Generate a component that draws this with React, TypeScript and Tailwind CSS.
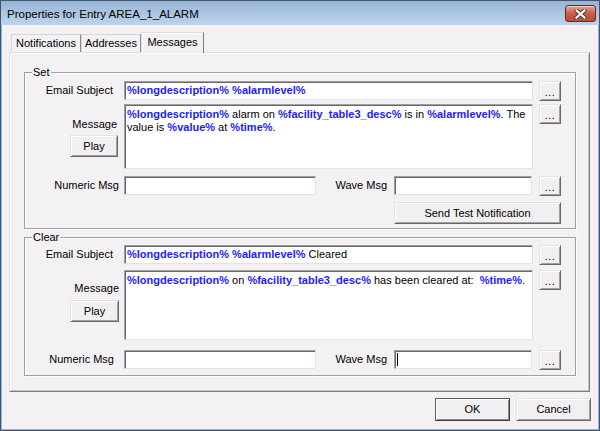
import type { ReactNode } from 'react';

const V = ({ children }: { children: ReactNode }) => (
  <span className="font-bold text-[#1c1cff]">{children}</span>
);

function Btn({ children, className = '', primary = false }: { children: ReactNode; className?: string; primary?: boolean }) {
  return (
    <div
      className={`flex items-center justify-center shrink-0 bg-[#f2eff2] border ${
        primary
          ? 'border-t-[#5a5a5a] border-l-[#5a5a5a] border-r-[#3c3c3c] border-b-[#3c3c3c] shadow-[inset_1px_1px_0_#ffffff,inset_-1px_-1px_0_#8a8a8a]'
          : 'border-t-[#e3e3e3] border-l-[#e3e3e3] border-r-[#696969] border-b-[#696969] shadow-[inset_1px_1px_0_#ffffff,inset_-1px_-1px_0_#a0a0a0]'
      } ${className}`}
    >
      {children}
    </div>
  );
}

function Dots() {
  return (
    <Btn className="w-[22px] h-[20px]">
      <span className="mt-[3px] tracking-[0.5px]">...</span>
    </Btn>
  );
}

function Field({ children, className = '' }: { children?: ReactNode; className?: string }) {
  return (
    <div
      className={`shrink-0 bg-white border border-t-[#a0a0a0] border-l-[#a0a0a0] border-r-[#e3e3e3] border-b-[#e3e3e3] shadow-[inset_1px_1px_0_#6a6a6a] overflow-hidden whitespace-nowrap ${className}`}
    >
      {children}
    </div>
  );
}

function Group({ title, className = '', children }: { title: string; className?: string; children: ReactNode }) {
  return (
    <div className={`relative border border-[#a0a0a0] shadow-[inset_1px_1px_0_#ffffff,1px_1px_0_#ffffff] ${className}`}>
      <span className="absolute -top-[7px] left-[7px] px-[1px] bg-[#f4f1f4] leading-[13px]">{title}</span>
      {children}
    </div>
  );
}

function CloseIcon() {
  return (
    <svg width="13" height="10" viewBox="0 0 13 10">
      <path d="M2.5 1.5 L10.5 8.5 M10.5 1.5 L2.5 8.5" stroke="#3d3d3d" strokeWidth="4" strokeLinecap="square" />
      <path d="M2.5 1.5 L10.5 8.5 M10.5 1.5 L2.5 8.5" stroke="#ffffff" strokeWidth="2.2" strokeLinecap="square" />
    </svg>
  );
}

export default function App() {
  return (
    <div className="w-[600px] h-[431px] flex flex-col border border-[#44566e] bg-[#f4f1f4] font-['Liberation_Sans',Arial,sans-serif] text-[11px] leading-[13px] text-black overflow-hidden">
      {/* Title bar */}
      <div className="h-[24px] shrink-0 flex items-start justify-between bg-gradient-to-b from-[#98b4d5] to-[#bcd4ed] pl-[6px] pr-[3px]">
        <span className="mt-[6px] text-[11.5px] leading-[14px]">Properties for Entry AREA_1_ALARM</span>
        <div className="mt-[4px] w-[31px] h-[17px] rounded-[3px] border border-[#6a2a22] bg-gradient-to-b from-[#e6a493] via-[#cc5c47] to-[#c24a33] shadow-[inset_0_1px_0_#f4c8bc] flex items-center justify-center">
          <CloseIcon />
        </div>
      </div>

      {/* Body */}
      <div className="flex-1 flex flex-col border-x border-b border-[#7fb6e3] pl-[7px] pt-[7px]">
        {/* Tabs */}
        <div className="flex items-end h-[20px] pl-[2px]">
          <div className="h-[18px] w-[70px] flex items-center justify-center border-t border-l border-r border-t-[#d6d6d6] border-l-[#d6d6d6] border-r-[#8a8a8a]">
            Notifications
          </div>
          <div className="h-[18px] w-[60px] flex items-center justify-center border-t border-l border-r border-t-[#d6d6d6] border-l-[#d6d6d6] border-r-[#8a8a8a]">
            Addresses
          </div>
          <div className="relative z-10 h-[21px] -mb-[1px] w-[63px] flex items-center justify-center pb-[2px] bg-[#f4f1f4] border-t border-l border-r border-t-[#dedede] border-l-[#dedede] border-r-[#7a7a7a] shadow-[inset_1px_1px_0_#ffffff]">
            Messages
          </div>
        </div>

        {/* Tab panel */}
        <div className="w-[581px] h-[340px] border border-t-[#dedede] border-l-[#dedede] border-r-[#7e7e7e] border-b-[#7e7e7e] shadow-[inset_1px_1px_0_#ffffff,inset_-1px_-1px_0_#c4c4c4] pl-[14px] pt-[19px]">
          {/* Set */}
          <Group title="Set" className="w-[552px] h-[157px]">
            <div className="pt-[8px]">
              <div className="flex items-start h-[20px]">
                <div className="w-[99px] shrink-0 text-right pr-[11px] pt-[3px]">Email Subject</div>
                <Field className="w-[409px] h-[19px] px-[2px] pt-[2px]">
                  <V>%longdescription% %alarmlevel%</V>
                </Field>
                <div className="ml-[6px]"><Dots /></div>
              </div>

              <div className="flex items-start mt-[3px]">
                <div className="w-[99px] shrink-0 flex flex-col items-end pr-[6px]">
                  <span className="mt-[14px] pr-[1px]">Message</span>
                  <Btn className="mt-[4px] w-[48px] h-[22px]">Play</Btn>
                </div>
                <Field className="w-[409px] h-[65px] px-[2px] pt-[3px]">
                  <div>
                    <V>%longdescription%</V> alarm on <V>%facility_table3_desc%</V> is in <V>%alarmlevel%</V>. The
                  </div>
                  <div>
                    value is <V>%value%</V> at <V>%time%</V>.
                  </div>
                </Field>
                <div className="ml-[6px]"><Dots /></div>
              </div>

              <div className="flex items-start h-[20px] mt-[7px]">
                <div className="w-[99px] shrink-0 text-right pr-[5px] pt-[3px]">Numeric Msg</div>
                <Field className="w-[192px] h-[19px]" />
                <div className="w-[78px] shrink-0 text-right pr-[7px] pt-[3px]">Wave Msg</div>
                <Field className="w-[138px] h-[19px]" />
                <div className="ml-[7px]"><Dots /></div>
              </div>

              <div className="flex mt-[6px] pl-[369px]">
                <Btn className="w-[167px] h-[22px]">Send Test Notification</Btn>
              </div>
            </div>
          </Group>

          {/* Clear */}
          <Group title="Clear" className="w-[552px] h-[139px] mt-[8px]">
            <div className="pt-[7px]">
              <div className="flex items-start h-[20px]">
                <div className="w-[99px] shrink-0 text-right pr-[11px] pt-[3px]">Email Subject</div>
                <Field className="w-[409px] h-[19px] px-[2px] pt-[2px]">
                  <V>%longdescription% %alarmlevel%</V> Cleared
                </Field>
                <div className="ml-[6px]"><Dots /></div>
              </div>

              <div className="flex items-start mt-[5px]">
                <div className="w-[99px] shrink-0 flex flex-col items-end pr-[5px]">
                  <span className="mt-[12px]">Message</span>
                  <Btn className="mt-[5px] w-[49px] h-[22px]">Play</Btn>
                </div>
                <Field className="w-[409px] h-[70px] px-[2px] pt-[3px]">
                  <div>
                    <V>%longdescription%</V> on <V>%facility_table3_desc%</V> has been cleared at:&nbsp; <V>%time%</V>.
                  </div>
                </Field>
                <div className="ml-[6px]"><Dots /></div>
              </div>

              <div className="flex items-start h-[20px] mt-[10px]">
                <div className="w-[99px] shrink-0 text-right pr-[10px] pt-[3px]">Numeric Msg</div>
                <Field className="w-[192px] h-[19px]" />
                <div className="w-[78px] shrink-0 text-right pr-[7px] pt-[3px]">Wave Msg</div>
                <Field className="w-[138px] h-[19px] flex items-center pl-[2px]">
                  <div className="w-px h-[13px] bg-black" />
                </Field>
                <div className="ml-[7px]"><Dots /></div>
              </div>
            </div>
          </Group>
        </div>

        {/* Dialog buttons */}
        <div className="w-[582px] flex justify-end gap-[6px] mt-[6px]">
          <Btn primary className="w-[75px] h-[23px]">OK</Btn>
          <Btn className="w-[75px] h-[23px]">Cancel</Btn>
        </div>
      </div>
    </div>
  );
}
